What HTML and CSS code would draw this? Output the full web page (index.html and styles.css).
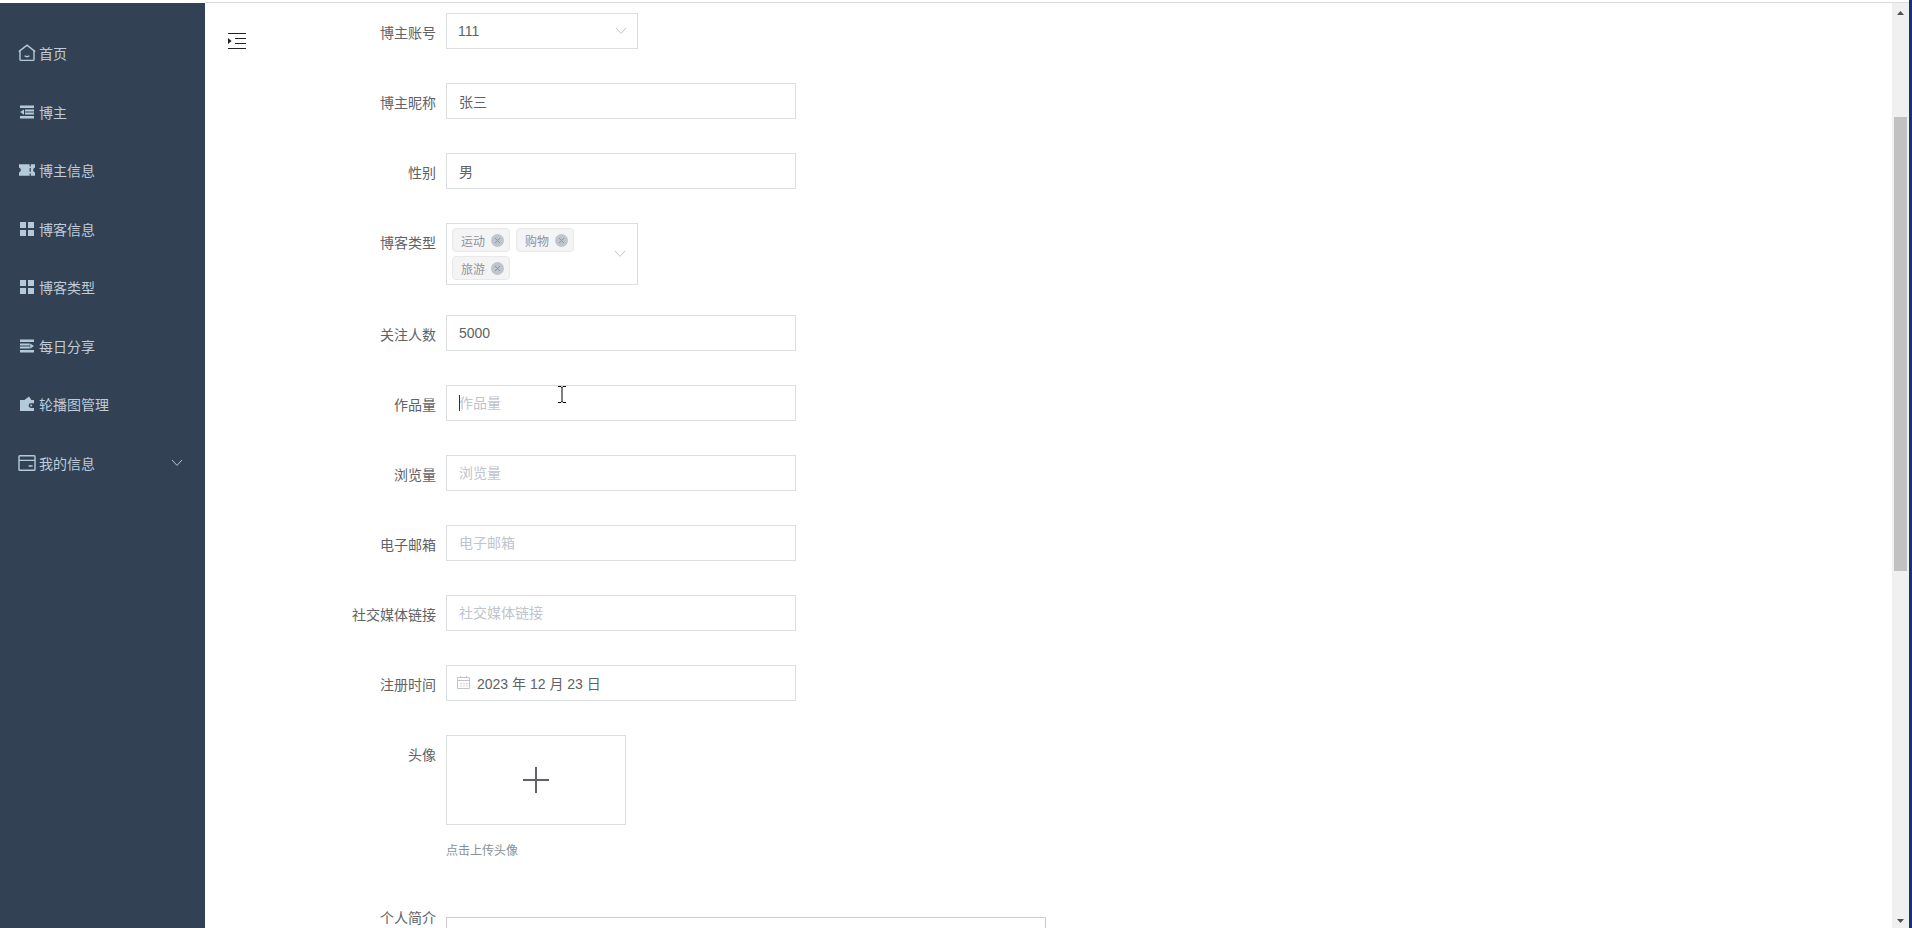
FILE: index.html
```html
<!DOCTYPE html>
<html lang="zh-CN">
	<head>
		<meta charset="UTF-8">
		<title>博主</title>
		<link rel="stylesheet" href="styles.css">
	</head>
	<body>
		<div class="app">
			<nav class="sidebar">
				<ul class="menu">
					<li><a href="#">
						<svg class="icon" viewBox="0 0 18 18"><path class="line" d="M.8 7.6 9 1.2l8.2 6.4M2 6.8V15.4q0 1 1 1H15q1 0 1-1V6.8M6.6 11.8q2.4 1.8 4.8 0"/></svg>
						首页</a></li>
					<li><a href="#">
						<svg class="icon" viewBox="0 0 18 18"><path d="M2 2.4h14v2.6H2zM7 6.6h9v2H7zM7 9.6h9v2H7zM2 13h14v2.6H2zM6 6.4v5.4L2.2 9.1z"/></svg>
						博主</a></li>
					<li><a href="#">
						<svg class="icon" viewBox="0 0 18 18"><path d="M1 3.3h10.6v2.2h1.2V3.3H17v3.2a2.6 2.6 0 0 0 0 5v3.2h-4.2v-2.2h-1.2v2.2H1v-3.2a2.6 2.6 0 0 0 0-5zM11.6 7v3.8h1.2V7z" fill-rule="evenodd"/></svg>
						博主信息</a></li>
					<li><a href="#">
						<svg class="icon" viewBox="0 0 18 18"><path d="M2 2h6v6H2zM10 2h6v6h-6zM2 10h6v6H2zM10 10h6v6h-6z"/></svg>
						博客信息</a></li>
					<li><a href="#">
						<svg class="icon" viewBox="0 0 18 18"><path d="M2 2h6v6H2zM10 2h6v6h-6zM2 10h6v6H2zM10 10h6v6h-6z"/></svg>
						博客类型</a></li>
					<li><a href="#">
						<svg class="icon" viewBox="0 0 18 18"><path d="M2 2.4h14v2.6H2zM2 6.6h9.8v2H2zM2 9.6h9.8v2H2zM2 13h14v2.6H2zM12.2 6.4v5.4L16 9.1z"/></svg>
						每日分享</a></li>
					<li><a href="#">
						<svg class="icon" viewBox="0 0 18 18"><path d="M2 5h4.4L11 1.6 13.4 5H16v3.2h-3a2.4 2.4 0 0 0 0 4.8h3v3H2z"/><circle cx="13.2" cy="10.6" r="1"/></svg>
						轮播图管理</a></li>
					<li><a href="#">
						<svg class="icon" viewBox="0 0 18 18"><path class="line" d="M1.8 1.8h14.4a.8.8 0 0 1 .8.8v12.8a.8.8 0 0 1-.8.8H1.8a.8.8 0 0 1-.8-.8V2.6a.8.8 0 0 1 .8-.8zM1 6.4h16M10.6 12h4"/></svg>
						我的信息
						<svg class="arrow" viewBox="0 0 12 12"><path d="M1 3l5 5.4L11 3"/></svg></a></li>
				</ul>
			</nav>

			<main class="main">
				<button class="fold" type="button" aria-label="折叠菜单">
					<svg viewBox="0 0 18 18"><path d="M0 1.5h18M7 6.5h11M7 11.5h11M0 16.5h18"/><path class="tri" d="M0 6v6l3.6-3z"/></svg>
				</button>

				<form class="form">
					<div class="item">
						<label for="account">博主账号</label>
						<div class="select">
							<select id="account" class="input"><option>111</option></select>
							<svg class="arrow" viewBox="0 0 12 12"><path d="M1 3l5 5.4L11 3"/></svg>
						</div>
					</div>
					<div class="item">
						<label for="nickname">博主昵称</label>
						<input id="nickname" class="input" type="text" value="张三">
					</div>
					<div class="item">
						<label for="sex">性别</label>
						<input id="sex" class="input" type="text" value="男">
					</div>
					<div class="item">
						<span class="label" id="type-label">博客类型</span>
						<div class="select multiple" role="group" aria-labelledby="type-label">
							<div class="tags">
								<span class="tag">运动<button type="button" aria-label="移除运动"><svg viewBox="0 0 13 13"><path d="M4 4l5 5M9 4l-5 5"/></svg></button></span>
								<span class="tag">购物<button type="button" aria-label="移除购物"><svg viewBox="0 0 13 13"><path d="M4 4l5 5M9 4l-5 5"/></svg></button></span>
								<span class="tag">旅游<button type="button" aria-label="移除旅游"><svg viewBox="0 0 13 13"><path d="M4 4l5 5M9 4l-5 5"/></svg></button></span>
							</div>
							<svg class="arrow" viewBox="0 0 12 12"><path d="M1 3l5 5.4L11 3"/></svg>
						</div>
					</div>
					<div class="item">
						<label for="fans">关注人数</label>
						<input id="fans" class="input" type="text" value="5000">
					</div>
					<div class="item">
						<label for="works">作品量</label>
						<div class="field">
							<input id="works" class="input" type="text" placeholder="作品量">
							<span class="caret"></span>
							<svg class="ibeam" viewBox="0 0 8 17"><path d="M0 .5h3l1 1 1-1h3M4 1v15M0 16.5h3l1-1 1 1h3"/></svg>
						</div>
					</div>
					<div class="item">
						<label for="views">浏览量</label>
						<input id="views" class="input" type="text" placeholder="浏览量">
					</div>
					<div class="item">
						<label for="email">电子邮箱</label>
						<input id="email" class="input" type="text" placeholder="电子邮箱">
					</div>
					<div class="item">
						<label for="social">社交媒体链接</label>
						<input id="social" class="input" type="text" placeholder="社交媒体链接">
					</div>
					<div class="item">
						<label for="date">注册时间</label>
						<div class="field date">
							<input id="date" class="input" type="text" value="2023 年 12 月 23 日">
							<svg class="calendar" viewBox="0 0 14 14"><path d="M.5 1.5h12v11H.5zM.5 4.5h12M3.5 0v2M9.5 0v2"/><path class="days" d="M3 7.5h2M6 7.5h2M9 7.5h2M3 10h2M6 10h2M9 10h2"/></svg>
						</div>
					</div>
					<div class="item">
						<span class="label">头像</span>
						<div class="avatar">
							<button class="upload" type="button" aria-label="上传头像">
								<svg viewBox="0 0 26 26"><path d="M13 0v26M0 13h26"/></svg>
							</button>
							<p class="tip">点击上传头像</p>
						</div>
					</div>
					<div class="item">
						<label for="intro">个人简介</label>
						<textarea id="intro" class="intro"></textarea>
					</div>
				</form>
			</main>

			<!-- 滚动条 -->
			<div class="scrollbar">
				<svg viewBox="0 0 7 4"><path d="M0 4 3.5 0 7 4z"/></svg>
				<div class="before"></div>
				<div class="thumb"></div>
				<div class="after"></div>
				<svg viewBox="0 0 7 4"><path d="M0 0h7L3.5 4z"/></svg>
			</div>
		</div>
	</body>
</html>
```

FILE: styles.css
```css
*{
    margin: 0;
    padding: 0;
    box-sizing: border-box;
}
body{
    font: 14px "Liberation Sans", "Noto Sans CJK SC", sans-serif;
    color: #606266;
    background: #fff;
    overflow: hidden;
}
button,input,select,textarea{
    font: inherit;
    color: inherit;
    outline: none;
}
svg{
    display: block;
    flex: none;
}
.app{
    display: flex;
    height: 100vh;
    padding-top: 2px;
    border-right: 3px solid #12347a;
}

/* 左侧菜单 */
.sidebar{
    flex: none;
    width: 205px;
    margin-top: 1px;
    padding-top: 21px;
    background: #324254;
}
.menu{
    display: grid;
    grid-auto-rows: 1fr;
    height: 468px;
    list-style: none;
}
.menu a{
    display: flex;
    align-items: center;
    gap: 3px;
    height: 100%;
    padding: 0 22px 0 18px;
    color: #bfcbd9;
    text-decoration: none;
}
.icon{
    width: 18px;
    height: 18px;
    fill: #b4cadb;
}
.icon .line{
    fill: none;
    stroke: #b4cadb;
    stroke-width: 1.4;
}
.arrow{
    width: 12px;
    height: 12px;
    fill: none;
    stroke: #c0c4cc;
}
.menu .arrow{
    margin-left: auto;
}

/* 右侧内容 */
.main{
    flex: 1;
    display: flex;
    align-items: flex-start;
    overflow: hidden;
    border-top: 1px solid #dcdcdc;
}
.fold{
    margin: 29px 0 0 23px;
    border: 0;
    background: none;
}
.fold svg{
    width: 18px;
    height: 18px;
    fill: none;
    stroke: #222;
}
.fold .tri{
    fill: #222;
    stroke: none;
}
.form{
    flex: 1;
    padding: 10px 0 0 80px;
}
.item{
    display: flex;
    align-items: flex-start;
    min-height: 40px;
    margin-bottom: 30px;
}
.item label,.label{
    flex: none;
    width: 120px;
    padding-right: 10px;
    line-height: 40px;
    text-align: right;
}
.input{
    display: block;
    width: 350px;
    height: 36px;
    padding: 0 12px 1px;
    border: 1px solid #dcdfe0;
    background: #fff;
}
.input::placeholder{
    color: #c0c4cc;
}
.select,.field{
    position: relative;
}
.select .input{
    width: 192px;
    padding-left: 11px;
    appearance: none;
}
.select .arrow{
    position: absolute;
    top: calc(50% - 6px);
    right: 11px;
}
.multiple{
    width: 192px;
    padding: 4px 40px 4px 5px;
    border: 1px solid #dcdfe0;
}
.tags{
    display: flex;
    flex-wrap: wrap;
    gap: 4px 6px;
}
.tag{
    display: flex;
    align-items: center;
    gap: 6px;
    height: 24px;
    padding: 0 5px 0 8px;
    border: 1px solid #e9e9eb;
    border-radius: 4px;
    background: #f4f4f5;
    color: #909399;
    font-size: 12px;
}
.tag button{
    border: 0;
    border-radius: 50%;
    background: #c0c4cc;
}
.tag svg{
    width: 13px;
    height: 13px;
    stroke: #909399;
}
.caret{
    position: absolute;
    top: 10px;
    left: 13px;
    width: 1px;
    height: 16px;
    background: #303133;
}
.ibeam{
    position: absolute;
    top: 1px;
    left: 112px;
    width: 8px;
    height: 17px;
    fill: none;
    stroke: #000;
}
.date .input{
    padding-left: 30px;
}
.calendar{
    position: absolute;
    top: 11px;
    left: 11px;
    width: 14px;
    height: 14px;
    fill: none;
    stroke: #c0c4cc;
}
.calendar .days{
    stroke: #d4d7dc;
}
.upload{
    display: flex;
    align-items: center;
    justify-content: center;
    width: 180px;
    height: 90px;
    border: 1px solid #dcdfe0;
    background: #fff;
}
.upload svg{
    width: 26px;
    height: 26px;
    stroke: #606266;
    stroke-width: 2;
}
.tip{
    padding: 16px 0 7px;
    color: #889099;
    font-size: 12px;
    line-height: 20px;
}
.intro{
    width: 600px;
    height: 120px;
    margin-top: 19px;
    padding: 12px;
    border: 1px solid #ccc;
    resize: none;
}

/* 滚动条 */
.scrollbar{
    flex: none;
    display: flex;
    flex-direction: column;
    align-items: center;
    width: 17px;
    padding: 8px 0 5px;
    border-top: 1px solid #dcdcdc;
    background: #f0f0f0;
}
.scrollbar svg{
    width: 7px;
    height: 4px;
    fill: #505050;
}
.before{
    flex: 102;
}
.thumb{
    flex: 454;
    width: 13px;
    background: #c1c1c1;
}
.after{
    flex: 348;
}
```
